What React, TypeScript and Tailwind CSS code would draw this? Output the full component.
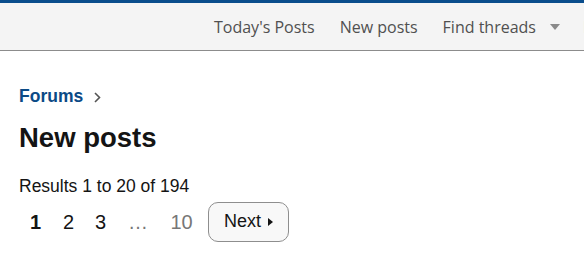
import React from 'react';

const navItems = ["Today's Posts", 'New posts', 'Find threads'];

const App: React.FC = () => {
  return (
    <div className="min-h-screen bg-white font-['Liberation_Sans',Arial,sans-serif] text-[#141414] overflow-hidden">
      {/* top strip */}
      <div className="h-[3px] bg-[#0a4d8c]" />
      <nav className="h-[48px] bg-[#f4f4f4] border-b border-[#8c8c8c] flex items-center pl-[214px] font-['Open_Sans',sans-serif] text-[16px] text-[#505050] whitespace-nowrap overflow-hidden">
        <div className="flex items-center gap-[25px] pt-[1px]">
          {navItems.map((item) => (
            <span key={item}>{item}</span>
          ))}
          <svg width="10" height="6" viewBox="0 0 10 6" className="-ml-[11px] fill-[#8a8a8a] shrink-0">
            <path d="M0 0h10L5 6z" />
          </svg>
          <span className="-ml-[2px]">New</span>
        </div>
      </nav>

      <div className="px-[19px] pt-[37px]">
        {/* breadcrumbs */}
        <div className="flex items-center gap-[11px] text-[17.5px] font-bold text-[#0b4a86] leading-none">
          <span>Forums</span>
          <svg width="7" height="11" viewBox="0 0 7 11" className="stroke-[#555] fill-none mt-[1px]">
            <path d="M1 1l4.5 4.5L1 10" strokeWidth="1.6" />
          </svg>
        </div>

        <h1 className="mt-[18px] text-[27.5px] font-bold leading-none">New posts</h1>

        <div className="mt-[27px] text-[17.5px] leading-none">Results 1 to 20 of 194</div>

        <div className="mt-[6px] flex items-center text-[20px]">
          <span className="w-[33px] text-center font-bold">1</span>
          <span className="w-[33px] text-center">2</span>
          <span className="w-[31px] text-center">3</span>
          <span className="w-[44px] text-center text-[#777]">…</span>
          <span className="w-[43px] text-center text-[#777]">10</span>
          <button className="ml-[5px] h-[40px] w-[81px] flex items-center justify-center gap-[7px] rounded-[10px] border border-[#8e8e8e] bg-[#f8f8f8] text-[18px] text-[#141414]">
            Next
            <svg width="5" height="8" viewBox="0 0 5 8" className="fill-[#141414]">
              <path d="M0 0l5 4-5 4z" />
            </svg>
          </button>
        </div>
      </div>
    </div>
  );
};

export default App;
